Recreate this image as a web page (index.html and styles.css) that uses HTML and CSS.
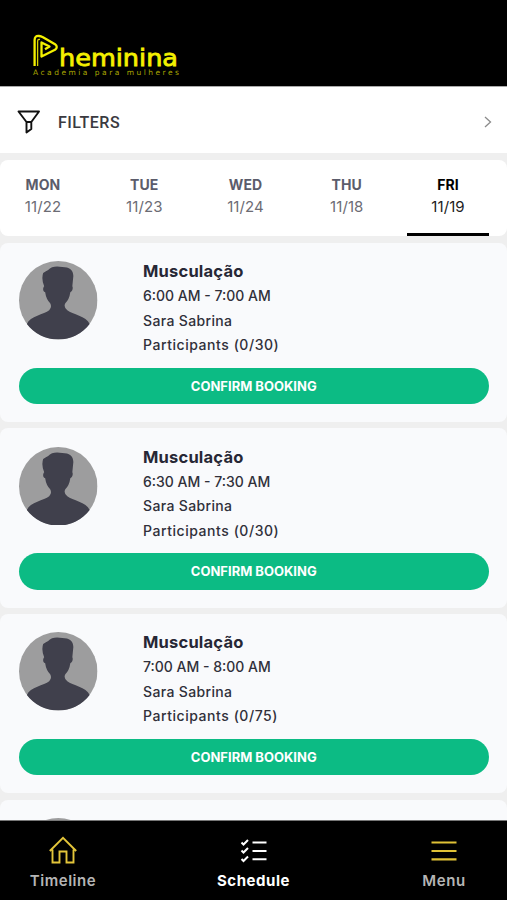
FILE: index.html
```html
<!DOCTYPE html>
<html lang="en">
<head>
<meta charset="utf-8">
<title>Schedule</title>
<link rel="stylesheet" href="styles.css">
</head>
<body>
<svg width="0" height="0" class="defs" aria-hidden="true">
  <symbol id="avatar" viewBox="0 0 78 78">
    <circle cx="39" cy="39" r="39" fill="#9d9d9e"/>
    <path d="M7.800 62.500C11 55 25 53 30 49Q33 46 31 42Q27 38 26 31C23 30 24 26 25 25Q22 18 24 12Q27 10 29 9C32 5 38 5 43 6C50 6 54 9 54 15L53 25C54 27 53 30 51 31Q50 38 46 42Q44 46 48 49C53 53 67 55 70.200 62.500A39 39 0 0 1 7.800 62.500Z" fill="#40404c"/>
  </symbol>
</svg>
<div class="app">
  <header class="header">
    <svg class="logo" width="150" height="46" viewBox="0 0 150 46">
      <path d="M2.600 35V9Q2.600 4.500 7 5Q9 5.200 11 6.200L23 13.200Q26.500 16 23 18.800L9.500 25.500V11.500L17.500 15.600L13 18.300" fill="none" stroke="#f4f000" stroke-width="2.300" stroke-linejoin="round"/>
      <path d="M5.600 35V10Q5.800 8 8 8.500" fill="none" stroke="#d8d400" stroke-width="1.300"/>
      <text class="logo-name" x="27" y="34.500" textLength="119" lengthAdjust="spacingAndGlyphs">heminina</text>
      <text class="logo-tag" x="1" y="44" textLength="146" lengthAdjust="spacing">Academia para mulheres</text>
    </svg>
  </header>
  <div class="filters">
    <svg width="24" height="26" viewBox="0 0 24 26" fill="none" stroke="#111" stroke-width="1.900" stroke-linejoin="round"><path d="M1.500 2.500H22L14.300 13V20L9.500 23.500V13ZM9.500 13H14.500"/></svg>
    <span class="filters-label">FILTERS</span>
    <svg class="chevron" width="8" height="12" viewBox="0 0 8 12" fill="none" stroke="#8b8b8b" stroke-width="1.300"><path d="M1 1L6.500 6L1 11"/></svg>
  </div>
  <nav class="days">
    <div class="day"><b>MON</b><span>11/22</span></div>
    <div class="day"><b>TUE</b><span>11/23</span></div>
    <div class="day"><b>WED</b><span>11/24</span></div>
    <div class="day"><b>THU</b><span>11/18</span></div>
    <div class="day active"><b>FRI</b><span>11/19</span></div>
  </nav>
  <main class="list">
    <article class="card">
      <div class="info"><svg class="avatar"><use href="#avatar"/></svg>
        <div class="lines"><h2>Musculação</h2><p class="time">6:00 AM - 7:00 AM</p><p class="name">Sara Sabrina</p><p class="people">Participants (0/30)</p></div></div>
      <button>CONFIRM BOOKING</button>
    </article>
    <article class="card">
      <div class="info"><svg class="avatar"><use href="#avatar"/></svg>
        <div class="lines"><h2>Musculação</h2><p class="time">6:30 AM - 7:30 AM</p><p class="name">Sara Sabrina</p><p class="people">Participants (0/30)</p></div></div>
      <button>CONFIRM BOOKING</button>
    </article>
    <article class="card">
      <div class="info"><svg class="avatar"><use href="#avatar"/></svg>
        <div class="lines"><h2>Musculação</h2><p class="time">7:00 AM - 8:00 AM</p><p class="name">Sara Sabrina</p><p class="people">Participants (0/75)</p></div></div>
      <button>CONFIRM BOOKING</button>
    </article>
    <article class="card">
      <div class="info"><svg class="avatar"><use href="#avatar"/></svg></div>
    </article>
  </main>
  <footer class="tabs">
    <div class="tab">
      <svg width="30" height="28" viewBox="0 0 30 28" fill="none" stroke="#e3c53a" stroke-width="1.900"><path d="M4.500 13.500V26.500H11.500V15.500H18.500V26.500H25.500V13.500M1.800 15L15 1.800L28.200 15"/></svg>
      <span>Timeline</span>
    </div>
    <div class="tab current">
      <svg width="30" height="28" viewBox="0 0 30 28" fill="none" stroke="#fff" stroke-width="2"><path d="M2.500 6.500L4.500 8.500L9 4M2.500 14.500L4.500 16.500L9 12M2.500 23L4.500 25L9 20.500M13.500 6.500H27.500M13.500 15H27.500M13.500 23.300H27.500"/></svg>
      <span>Schedule</span>
    </div>
    <div class="tab">
      <svg width="30" height="28" viewBox="0 0 30 28" fill="none" stroke="#dfc136" stroke-width="2.200"><path d="M2.500 6.500H27.500M2.500 15H27.500M2.500 23.300H27.500"/></svg>
      <span>Menu</span>
    </div>
  </footer>
</div>
</body>
</html>
```
FILE: styles.css
```css
* { box-sizing: border-box; }
body { margin: 0; font-family: Inter, Roboto, sans-serif; background: #efefef; }
.defs { position: absolute; }
.app { display: flex; flex-direction: column; width: 507px; height: 900px; overflow: hidden; }
.header { flex: none; height: 86px; padding: 31px 0 0 32px; background: #000; }
.logo { display: block; }
.logo-name { font: 23.5px "DejaVu Sans", sans-serif; fill: #f4f000; stroke: #f4f000; stroke-width: .8; }
.logo-tag { font: 7.5px "DejaVu Sans", sans-serif; fill: #aaa700; }
.filters { flex: none; display: flex; align-items: center; height: 67px; padding: 4px 15px 0 17px; background: #fff; border-top: 1px solid #aaa; }
.filters svg { flex: none; }
.filters-label { margin-left: 17px; font: 500 16px Roboto, sans-serif; letter-spacing: .5px; color: #3a3a40; }
.filters .chevron { margin-left: auto; }
.days { flex: none; display: flex; justify-content: space-between; height: 76px; margin-top: 7px; padding: 0 18px 0 2px; background: #fff; border-radius: 8px; }
.day { display: flex; flex-direction: column; align-items: center; width: 82px; padding-top: 14px; line-height: 22px; color: #6c6c74; }
.day b { font-size: 14px; letter-spacing: .1px; color: #5b5c6b; }
.day span { font-size: 15px; letter-spacing: .1px; }
.active { color: #222; background: linear-gradient(#000, #000) bottom / 100% 3.5px no-repeat; }
.active b { color: #000; }
.list { flex: 1; min-height: 0; overflow: hidden; display: flex; flex-direction: column; gap: 6.2px; padding-top: 6.5px; }
.card { flex: none; height: 179.5px; padding: 16.5px 18.5px 0 19px; background: #f9fafc; border-radius: 8px; }
.info { display: flex; gap: 45.5px; height: 108.5px; }
.avatar { flex: none; width: 78.5px; height: 78.5px; margin-top: 2px; }
.lines h2, .lines p { margin: 0; line-height: 24.5px; white-space: nowrap; color: #30303a; font-size: 14px; font-weight: 500; }
.lines h2 { height: 25.1px; font-size: 16.5px; font-weight: 700; letter-spacing: .2px; color: #272735; }
.lines .name { letter-spacing: .35px; }
.lines .people { letter-spacing: .55px; }
button { display: block; width: 100%; height: 36.5px; padding: 0; border: 0; border-radius: 19px; background: #0cbb84; color: #fff; font: 700 13px Inter, sans-serif; }
.tabs { flex: none; display: flex; justify-content: space-between; height: 80px; background: #000; border-top: 1px solid #777; }
.tab { display: flex; flex-direction: column; align-items: center; width: 126px; padding-top: 15px; color: #b5b5b5; font-size: 15px; font-weight: 600; line-height: 20px; letter-spacing: .55px; }
.tab span { margin-top: 7px; }
.current { color: #fff; font-weight: 700; }
```
